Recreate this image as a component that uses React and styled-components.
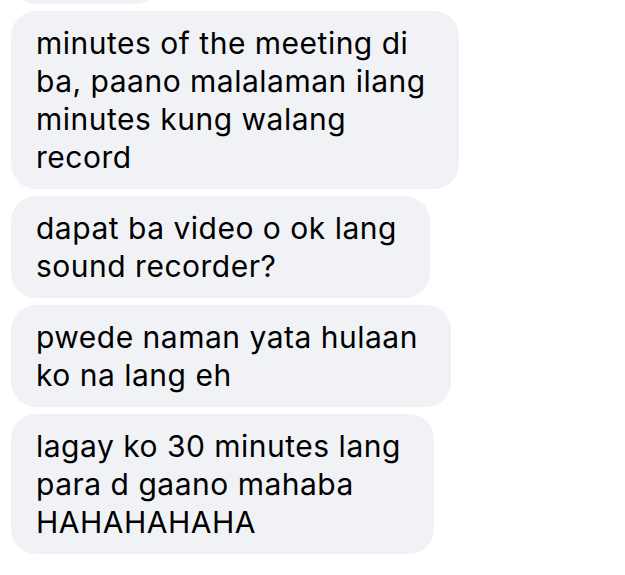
import styled, { createGlobalStyle } from 'styled-components';

const GlobalStyle = createGlobalStyle`
    body {
        margin: 0;
        background: #ffffff;
        font-family: Inter, "Liberation Sans", sans-serif;
    }
`;

const Thread = styled.div`
    height: 575px;
    overflow: hidden;
    display: flex;
    flex-direction: column;
    align-items: flex-start;
    gap: 7px;
    padding-left: 11px;
`;

const Bubble = styled.div`
    background: #f1f2f6;
    border-radius: 25px;
    padding: 13px 33px 13px 25px;
    color: #000000;
    font-size: 30px;
    line-height: 38px;
    letter-spacing: 0.5px;
    white-space: nowrap;
`;

const Clipped = styled(Bubble)`
    width: 149px;
    height: 60px;
    padding: 0;
    margin-top: -56px;
    flex-shrink: 0;
`;

const Line = styled.div``;

const messages = [
    ['minutes of the meeting di', 'ba, paano malalaman ilang', 'minutes kung walang', 'record'],
    ['dapat ba video o ok lang', 'sound recorder?'],
    ['pwede naman yata hulaan', 'ko na lang eh'],
    ['lagay ko 30 minutes lang', 'para d gaano mahaba', 'HAHAHAHAHA'],
];

export default function App() {
    return (
        <>
            <GlobalStyle />
            <Thread>
                <Clipped />
                {messages.map((lines, i) => (
                    <Bubble key={i}>
                        {lines.map((line) => (
                            <Line key={line}>{line}</Line>
                        ))}
                    </Bubble>
                ))}
            </Thread>
        </>
    );
}
